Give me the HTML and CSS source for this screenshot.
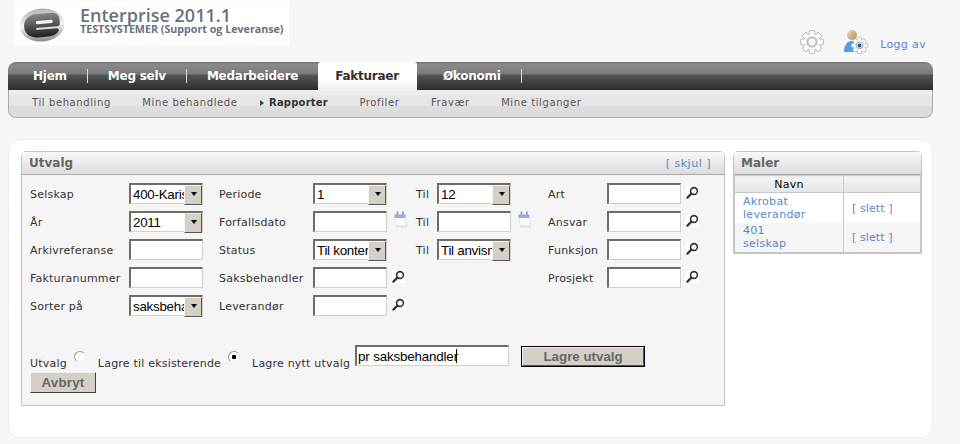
FILE: index.html
```html
<!DOCTYPE html>
<html lang="nb">
<head>
    <meta charset="UTF-8">
    <meta name="viewport" content="width=device-width, initial-scale=1.0">
    <title>Enterprise 2011.1</title>
    <link rel="stylesheet" href="styles.css">
</head>
<body>
    <svg class="defs" width="0" height="0">
        <defs>
            <symbol id="gear" viewBox="0 0 24 24">
                <g fill="#acacac" stroke="#acacac" stroke-width="1.5">
                    <circle cx="12" cy="12" r="7.8"/>
                    <rect x="9.500" y="1" width="5" height="22" rx="1"/>
                    <rect x="9.500" y="1" width="5" height="22" rx="1" transform="rotate(45 12 12)"/>
                    <rect x="9.500" y="1" width="5" height="22" rx="1" transform="rotate(90 12 12)"/>
                    <rect x="9.500" y="1" width="5" height="22" rx="1" transform="rotate(135 12 12)"/>
                </g>
                <g fill="#fbfbfb">
                    <circle cx="12" cy="12" r="7.8"/>
                    <rect x="9.500" y="1" width="5" height="22" rx="1"/>
                    <rect x="9.500" y="1" width="5" height="22" rx="1" transform="rotate(45 12 12)"/>
                    <rect x="9.500" y="1" width="5" height="22" rx="1" transform="rotate(90 12 12)"/>
                    <rect x="9.500" y="1" width="5" height="22" rx="1" transform="rotate(135 12 12)"/>
                </g>
                <circle cx="12" cy="12" r="4.6" fill="#f8f8f8" stroke="#c4c4c4" stroke-width="2.4"/>
            </symbol>
            <symbol id="search" viewBox="0 0 13 13">
                <rect width="13" height="13" fill="#fff"/>
                <circle cx="8" cy="5" r="3.4" fill="none" stroke="#333" stroke-width="1.6"/>
                <path d="M5.400 7.600 1.400 11.600" stroke="#333" stroke-width="2.2" stroke-linecap="round"/>
            </symbol>
            <symbol id="calendar" viewBox="0 0 15 17">
                <path d="M1.500 4h10.500l2.500 12.500H3z" fill="#dededa"/>
                <path d="M2.500 7h9.500l1 7.500H3.500z" fill="#fbfbfb"/>
                <rect x="1.500" y="3.500" width="11" height="3.500" fill="#8fb2e6"/>
                <rect x="3.500" y="0.500" width="1.800" height="4" fill="#98a2b4"/>
                <rect x="9" y="0.500" width="1.800" height="4" fill="#98a2b4"/>
            </symbol>
            <linearGradient id="logo-ring" x1="0" y1="0" x2="0" y2="1">
                <stop offset="0" stop-color="#b4b4b4"/>
                <stop offset="0.5" stop-color="#f6f6f6"/>
                <stop offset="1" stop-color="#8a8a8a"/>
            </linearGradient>
            <linearGradient id="logo-core" x1="0" y1="0" x2="0" y2="1">
                <stop offset="0" stop-color="#8a8a8a"/>
                <stop offset="1" stop-color="#1e1e1e"/>
            </linearGradient>
            <linearGradient id="head" x1="0" y1="0" x2="1" y2="1">
                <stop offset="0" stop-color="#f2dcb8"/>
                <stop offset="1" stop-color="#b08a5c"/>
            </linearGradient>
        </defs>
    </svg>

    <header class="top">
        <div class="logo">
            <svg class="logo-mark" width="46" height="34" viewBox="0 0 46 34">
                <g transform="rotate(-5 23 17)">
                    <ellipse cx="23" cy="17" rx="22.500" ry="16.500" fill="url(#logo-ring)"/>
                    <path d="M18 5.500h15c5 0 8 3 8 7.500v3.500c0 2-1 3-3 3H17v2h20c2 0 3 1 2 3-2 2.500-5 4.500-10 4.500H18C10 29 5 24 5 17.500S10 5.500 18 5.500z" fill="url(#logo-core)"/>
                    <rect x="17" y="12.500" width="17" height="3.400" rx="1.700" fill="#f4f4f4"/>
                </g>
            </svg>
            <div class="logo-text">
                <div class="logo-title">Enterprise 2011.1</div>
                <div class="logo-sub">TESTSYSTEMER (Support og Leveranse)</div>
            </div>
        </div>
        <div class="tools">
            <svg class="tool-gear" width="24" height="24"><use href="#gear"/></svg>
            <svg class="tool-user" width="24" height="24" viewBox="0 0 24 24">
                <path d="M0 22c0-7 3-11 8-11s8 3 8 11z" fill="#4f9fe8"/>
                <circle cx="8" cy="5" r="5" fill="url(#head)"/>
                <use href="#gear" x="7" y="7" width="17" height="17"/>
                <circle cx="15.500" cy="15.500" r="2" fill="#2a5f9e"/>
            </svg>
            <a class="link logout" href="#">Logg av</a>
        </div>
    </header>

    <nav class="nav">
        <ul class="tabs">
            <li class="tab">Hjem</li>
            <li class="tab-sep"></li>
            <li class="tab">Meg selv</li>
            <li class="tab-sep"></li>
            <li class="tab">Medarbeidere</li>
            <li class="tab tab-active">Fakturaer</li>
            <li class="tab tab-last">Økonomi</li>
            <li class="tab-sep"></li>
        </ul>
        <ul class="subtabs">
            <li class="subtab">Til behandling</li>
            <li class="subtab">Mine behandlede</li>
            <li class="subtab subtab-active">Rapporter</li>
            <li class="subtab">Profiler</li>
            <li class="subtab">Fravær</li>
            <li class="subtab">Mine tilganger</li>
        </ul>
    </nav>

    <main class="card">
        <section class="panel panel-form">
            <div class="panel-head">
                <h2>Utvalg</h2>
                <a class="link link-hide" href="#">[ skjul ]</a>
            </div>
            <form class="form">
                <div class="fields">
                    <label>Selskap</label>
                    <div class="select"><select><option>400-Karisma</option></select></div>
                    <label class="label-2">Periode</label>
                    <div class="select"><select><option>1</option></select></div>
                    <span></span>
                    <label>Til</label>
                    <div class="select"><select><option>12</option></select></div>
                    <span></span>
                    <label>Art</label>
                    <input type="text">
                    <svg class="icon-search" width="13" height="13"><use href="#search"/></svg>

                    <label>År</label>
                    <div class="select"><select><option>2011</option></select></div>
                    <label class="label-2">Forfallsdato</label>
                    <input type="text">
                    <svg class="icon-cal" width="15" height="17"><use href="#calendar"/></svg>
                    <label>Til</label>
                    <input type="text">
                    <svg class="icon-cal" width="15" height="17"><use href="#calendar"/></svg>
                    <label>Ansvar</label>
                    <input type="text">
                    <svg class="icon-search" width="13" height="13"><use href="#search"/></svg>

                    <label>Arkivreferanse</label>
                    <input type="text">
                    <label class="label-2">Status</label>
                    <div class="select"><select><option>Til kontering</option></select></div>
                    <span></span>
                    <label>Til</label>
                    <div class="select"><select><option>Til anvisning</option></select></div>
                    <span></span>
                    <label>Funksjon</label>
                    <input type="text">
                    <svg class="icon-search" width="13" height="13"><use href="#search"/></svg>

                    <label>Fakturanummer</label>
                    <input type="text">
                    <label class="label-2">Saksbehandler</label>
                    <input type="text">
                    <svg class="icon-search" width="13" height="13"><use href="#search"/></svg>
                    <span></span>
                    <span></span>
                    <span></span>
                    <label>Prosjekt</label>
                    <input type="text">
                    <svg class="icon-search" width="13" height="13"><use href="#search"/></svg>

                    <label>Sorter på</label>
                    <div class="select"><select><option>saksbehandler</option></select></div>
                    <label class="label-2">Leverandør</label>
                    <input type="text">
                    <svg class="icon-search" width="13" height="13"><use href="#search"/></svg>
                </div>
                <div class="save-row">
                    <label>Utvalg</label>
                    <input class="radio" type="radio" name="mode">
                    <label>Lagre til eksisterende</label>
                    <input class="radio" type="radio" name="mode" checked>
                    <label>Lagre nytt utvalg</label>
                    <div class="caret-box"><input class="name-input" type="text" value="pr saksbehandler"></div>
                    <button class="btn btn-default" type="button">Lagre utvalg</button>
                </div>
                <button class="btn btn-cancel" type="button">Avbryt</button>
            </form>
        </section>

        <aside class="panel panel-side">
            <div class="panel-head">
                <h2>Maler</h2>
            </div>
            <table class="templates">
                <thead>
                    <tr><th class="col-name">Navn</th><th></th></tr>
                </thead>
                <tbody>
                    <tr>
                        <td><a class="link" href="#">Akrobat<br>leverandør</a></td>
                        <td class="cell-del"><a class="link" href="#">[ slett ]</a></td>
                    </tr>
                    <tr class="row-alt">
                        <td><a class="link" href="#">401<br>selskap</a></td>
                        <td class="cell-del"><a class="link" href="#">[ slett ]</a></td>
                    </tr>
                </tbody>
            </table>
        </aside>
    </main>
</body>
</html>
```

FILE: styles.css
```css
* {
    box-sizing: border-box;
}
body {
    margin: 0;
    padding: 0 27px 6px 8px;
    background-color: #f7f7f7;
    font-family: "DejaVu Sans", Verdana, sans-serif;
    font-size: 11px;
    color: #333;
}
ul {
    list-style: none;
    margin: 0;
    padding: 0;
}
.defs {
    position: absolute;
}
.link {
    color: #5b87cc;
    text-decoration: none;
}

/* header */
.top {
    display: flex;
    justify-content: space-between;
    height: 62px;
    padding-top: 1px;
}
.logo {
    display: flex;
    width: 275px;
    height: 44px;
    margin-left: 6px;
    padding: 7px 0 0 5px;
    background-color: #fff;
}
.logo-text {
    margin-left: 15px;
    color: #68727e;
    font-family: "Open Sans", sans-serif;
    white-space: nowrap;
}
.logo-title {
    margin-top: -1px;
    font-size: 18px;
    font-weight: 600;
    line-height: 16px;
}
.logo-sub {
    font-size: 10.7px;
    font-weight: 700;
    line-height: 12px;
}
.tools {
    display: flex;
    align-items: flex-start;
    padding: 29px 7px 0 0;
}
.tool-user {
    margin-left: 20px;
}
.logout {
    margin: 8px 0 0 12px;
    letter-spacing: 0.35px;
}

/* navigation */
.tabs {
    display: flex;
    align-items: center;
    height: 28px;
    padding-left: 25px;
    border-radius: 8px 8px 0 0;
    background: linear-gradient(#777 0, #8a8a8a 3px, #7a7a7a 12px, #555 13px, #2c2c2c 100%);
}
.tab {
    color: #fff;
    font-size: 12px;
    font-weight: 700;
    letter-spacing: -0.25px;
}
.tab-sep {
    width: 1px;
    height: 14px;
    margin: 0 20px;
    background-color: #ddd;
}
.tab-active {
    align-self: stretch;
    margin: 0 26px 0 20px;
    padding: 7px 18px 0 17px;
    border-radius: 3px 3px 0 0;
    background: linear-gradient(#fff 60%, #eee);
    color: #333;
}
.subtabs {
    display: flex;
    height: 28px;
    padding: 7px 0 0 23px;
    border: 1px solid #aaa;
    border-top: 0;
    border-radius: 0 0 8px 8px;
    background: linear-gradient(#eee 0, #eee 5px, #e6e6e6 5px, #e6e6e6 16px, #ddd 16px);
}
.subtab {
    margin-right: 31.5px;
    color: #555;
    font-size: 10px;
    letter-spacing: 0.6px;
}
.subtab-active {
    font-weight: 700;
    color: #333;
    letter-spacing: 0.2px;
}
.subtab-active::before {
    content: "";
    display: inline-block;
    margin: 0 5px 0 -9px;
    border-left: 4px solid #444;
    border-top: 3px solid transparent;
    border-bottom: 3px solid transparent;
}

/* main card */
.card {
    display: flex;
    align-items: flex-start;
    gap: 8px;
    height: 299px;
    margin-top: 21px;
    padding: 12px 0 0 12px;
    border: 1px solid #eee;
    border-radius: 12px;
    background-color: #fff;
}
.panel {
    border: 1px solid #c4c4c4;
    border-radius: 5px 5px 0 0;
}
.panel-form {
    width: 704px;
    height: 255px;
    margin-top: -1px;
    background-color: #f5f5f5;
}
.panel-side {
    width: 189px;
    margin-top: -1px;
}
.panel-head {
    display: flex;
    justify-content: space-between;
    align-items: center;
    height: 23px;
    padding: 0 13px 0 7px;
    border-bottom: 1px solid #aaa;
    background: linear-gradient(#f8f8f8, #f0f0f0 30%, #dcdcdc);
}
.panel-head h2 {
    margin: 0;
    color: #666;
    font-size: 12px;
    font-weight: 700;
}
.link-hide {
    letter-spacing: 0.5px;
}

/* form */
.form {
    padding: 8px 8px 0;
}
.fields {
    display: grid;
    grid-template-columns: 99px 74px 110px 74px 29px 21px 74px 37px 59px 74px 20px;
    grid-auto-rows: 28px;
    align-items: start;
}
.fields label {
    align-self: start;
    margin-top: 4px;
    letter-spacing: 0.22px;
    line-height: 15px;
}
.fields .label-2 {
    padding-left: 16px;
}
.icon-search {
    margin: 3px 0 0 5px;
}
.icon-cal {
    margin: 0 0 0 6px;
}
input[type="text"], select {
    width: 74px;
    height: 21px;
    margin: 0;
    padding: 0 0 0 2px;
    border-style: solid;
    border-width: 2px 1px 1px 2px;
    border-color: #6f6e66 #d4d0c8 #d4d0c8 #6f6e66;
    border-radius: 0;
    background-color: #fff;
    color: #000;
    font-family: "Liberation Sans", Arial, sans-serif;
    font-size: 13.33px;
    outline: none;
}
.select {
    position: relative;
    width: 74px;
    height: 21px;
}
.select select {
    display: block;
    appearance: none;
    padding-right: 15px;
    letter-spacing: -0.25px;
}
.select::after {
    content: "";
    position: absolute;
    top: 2px;
    right: 1px;
    width: 16px;
    height: 18px;
    border: 1px solid;
    border-color: #f4f3ee #555 #555 #f4f3ee;
    background: #d4d0c8;
}
.select::before {
    content: "";
    position: absolute;
    z-index: 1;
    top: 9px;
    right: 6px;
    border-top: 4px solid #000;
    border-left: 3.5px solid transparent;
    border-right: 3.5px solid transparent;
}
.save-row {
    display: flex;
    align-items: flex-start;
    height: 27px;
    margin-top: 22px;
    color: #333;
}
.save-row label {
    margin-top: 11px;
    letter-spacing: 0.2px;
    line-height: 15px;
}
.radio {
    appearance: none;
    flex: none;
    width: 12px;
    height: 12px;
    margin: 6px 12px 0 7px;
    border: 1px solid;
    border-color: #999 #eee #eee #999;
    border-radius: 50%;
    background-color: #fff;
}
.radio:checked {
    background: radial-gradient(circle, #000 0, #000 2px, #fff 2.5px);
}
.caret-box {
    position: relative;
    margin-left: 5px;
}
.caret-box::after {
    content: "";
    position: absolute;
    top: 4px;
    left: 101px;
    width: 1px;
    height: 14px;
    background-color: #000;
}
input.name-input {
    display: block;
    width: 154px;
    height: 21px;
    padding-left: 1px;
    letter-spacing: -0.15px;
}
.btn {
    height: 21px;
    padding: 0;
    border: 1px solid;
    border-color: #f4f3ee #404040 #404040 #f4f3ee;
    border-radius: 0;
    background-color: #d4d0c8;
    color: #666;
    font-family: "Liberation Sans", Arial, sans-serif;
    font-size: 13.33px;
    font-weight: 700;
}
.btn-default {
    width: 124px;
    margin: 1px 0 0 12px;
    outline: 1px solid #000;
    outline-offset: -1px;
    border-width: 2px;
    border-color: #f4f3ee #555 #555 #f4f3ee;
}
.btn-cancel {
    display: block;
    width: 66px;
    letter-spacing: 0.2px;
}

/* side table */
.templates {
    width: 187px;
    table-layout: fixed;
    border-collapse: collapse;
    border: 1px solid #c8c8c8;
    border-top: 0;
    letter-spacing: 0.3px;
}
.templates th {
    height: 17px;
    padding: 0;
    border: 1px solid #c8c8c8;
    background: linear-gradient(#f6f6f6, #e6e6e6);
    color: #000;
    font-size: 11px;
    font-weight: 400;
}
.col-name {
    width: 109px;
}
.templates td {
    height: 30px;
    padding: 0 0 0 8px;
    border-right: 1px solid #c8c8c8;
    line-height: 13px;
}
.templates td.cell-del {
    padding: 1px 0 0 8px;
    letter-spacing: 0.1px;
}
.row-alt {
    background-color: #f5f5f5;
}
```
